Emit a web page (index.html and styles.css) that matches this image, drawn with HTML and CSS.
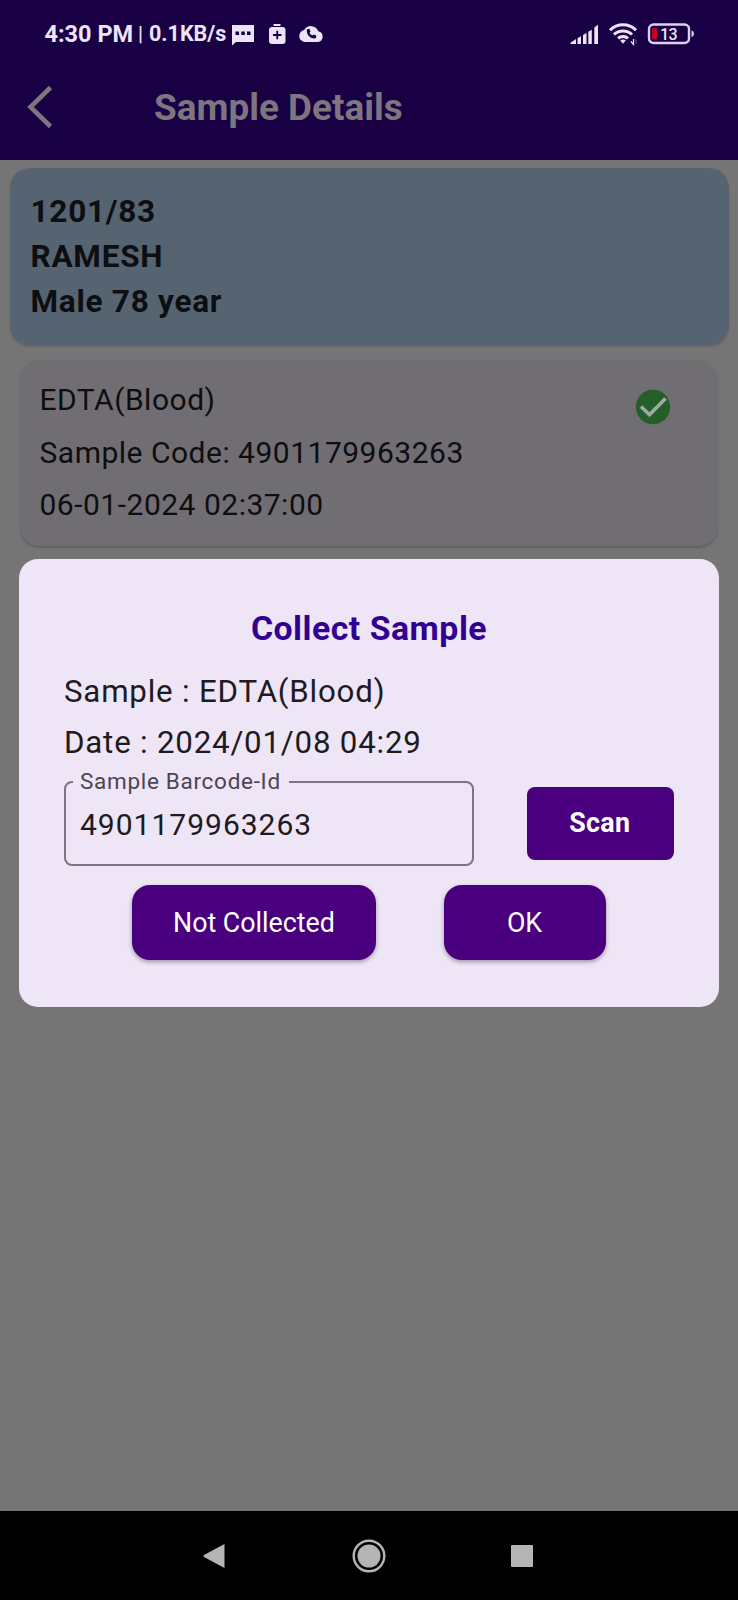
FILE: index.html
```html
<!DOCTYPE html>
<html lang="en">
<head>
<meta charset="utf-8">
<title>Sample Details</title>
<link rel="stylesheet" href="styles.css">
</head>
<body>
<div class="screen">
  <header class="header">
    <div class="status">
      <span class="clock">4:30 PM</span><span class="bar">|</span><span class="speed">0.1KB/s</span>
      <svg class="ic-chat" width="24" height="22" viewBox="0 0 24 22"><path fill="#ece4f7" d="M1 1h22v17H5l-4 3.500z"/><path fill="#190044" d="M4.500 7.500h3.500v3.500H4.500zM10.300 7.500h3.500v3.500h-3.500zM16 7.500h3.500v3.500H16z"/></svg>
      <svg class="ic-med" width="18" height="22" viewBox="0 0 18 22"><path fill="#ece4f7" d="M5.500 1h7v2h-7z"/><rect x="1" y="4" width="16.500" height="17" rx="3" fill="#ece4f7"/><path stroke="#190044" stroke-width="1.800" d="M5 12h8.500M9.250 7.800v8.400"/></svg>
      <svg class="ic-cloud" width="26" height="20" viewBox="0 0 26 20"><path fill="#ece4f7" d="M7 18a6 6 0 0 1-.800-11.900A7.800 7.800 0 0 1 20.300 7.200 5.500 5.500 0 0 1 20 18z"/><path fill="#190044" d="M9.300 5.300l2-.5 1.300 2.700-1.100 1.200q1 1.900 2.900 2.900l1.300-1 2.700 1.200-.4 2q-.5.800-1.700.8Q9.500 14 8.700 7q-.1-1.200.600-1.700z"/></svg>
      <span class="grow"></span>
      <svg class="ic-signal" width="29" height="21" viewBox="0 0 29 21"><path fill="#ece4f7" d="M.5 20v-1.300L6 15v5zM7.500 14.200l3.500-2V20H7.500zM13 11l3.500-2v11H13zM18.300 7.700l3.500-2V20h-3.500zM24.300 3.500L28 .8V20h-3.700z"/></svg>
      <svg class="ic-wifi" width="31" height="24" viewBox="0 0 31 24"><g fill="none" stroke="#ece4f7" stroke-width="3"><path d="M2 8.200a18.500 18.500 0 0 1 26 0"/><path d="M6 12.500a13 13 0 0 1 18 0"/><path d="M10 16.400a7.500 7.500 0 0 1 10 0"/></g><path fill="#ece4f7" d="M12.200 18.600q2.800-2.200 5.600 0L15 21.800z"/><path stroke="#ece4f7" stroke-width="1.200" fill="none" d="M25.500 17v5.500l-2.500-3"/><path stroke="#716096" d="M28 17.500v4"/></svg>
      <svg class="ic-battery" width="48" height="22" viewBox="0 0 48 22"><rect x="2" y="1.500" width="40" height="18.500" rx="4.500" fill="none" stroke="#ded0f0" stroke-width="2.400"/><rect x="5" y="5" width="5" height="11.500" rx="1.500" fill="#c8001c"/><path fill="#ded0f0" d="M44.500 7.500q2.500.5 2.500 3.300T44.500 14z"/><text x="13" y="17" textLength="17.500" class="batt">13</text></svg>
    </div>
    <div class="appbar">
      <svg class="back" width="28" height="44" viewBox="0 0 28 44"><path d="M24.500 2.500L4.500 22l20 19.500" fill="none" stroke="#7d757f" stroke-width="4.600"/></svg>
      <h1 class="title">Sample Details</h1>
    </div>
  </header>
  <main class="content">
    <section class="patient">
      <div>1201/83</div><div>RAMESH</div><div>Male 78 year</div>
    </section>
    <section class="sample">
      <div class="sample-lines"><div>EDTA(Blood)</div><div>Sample Code: 4901179963263</div><div>06-01-2024 02:37:00</div></div>
      <svg class="check" width="36" height="36" viewBox="0 0 36 36"><circle cx="18" cy="18" r="17.200" fill="#245e28"/><path d="M6 17.500l8.500 8.300L30.500 9.500" fill="none" stroke="#a3a8a4" stroke-width="3.600"/></svg>
    </section>
    <section class="dialog">
      <h2 class="dialog-title">Collect Sample</h2>
      <div class="info">Sample : EDTA(Blood)</div>
      <div class="info date">Date : 2024/01/08 04:29</div>
      <div class="row">
        <fieldset class="field"><legend>Sample Barcode-Id</legend><div class="value">4901179963263</div></fieldset>
        <button class="scan">Scan</button>
      </div>
      <div class="actions"><button class="btn not">Not Collected</button><button class="btn ok">OK</button></div>
    </section>
  </main>
  <nav class="nav">
    <svg width="22" height="26" viewBox="0 0 22 26"><path fill="#b5b5b5" d="M21.500 1v24L1 14q-1-1 0-2z"/></svg>
    <svg class="home" width="34" height="34" viewBox="0 0 34 34"><circle cx="17" cy="17" r="15.300" fill="none" stroke="#b5b5b5" stroke-width="2.400"/><circle cx="17" cy="17" r="11.500" fill="#b5b5b5"/></svg>
    <div class="recent"></div>
  </nav>
</div>
</body>
</html>
```
FILE: styles.css
```css
* { box-sizing: border-box; }
body { margin: 0; font-family: Roboto, sans-serif; }
.screen { width: 738px; height: 1600px; display: flex; flex-direction: column; background: #757575; }
.header { height: 160px; background: #190044; }
.status { height: 68px; padding: 0 43.500px 0 44.500px; display: flex; align-items: center; color: #ece4f7; font-weight: 700; white-space: nowrap; line-height: 70px; }
.clock { width: 93.500px; font-size: 23.500px; }
.bar { width: 11px; font-size: 20px; font-weight: 500; }
.speed { width: 82px; font-size: 21.500px; }
.ic-chat { margin-top: 2px; }
.ic-med { margin: -1px 0 0 13px; }
.ic-cloud { margin: -1px 0 0 12px; }
.grow { flex: 1; }
.ic-signal { margin-right: 9px; }
.ic-wifi { margin-right: 8px; }
.batt { font: 500 16px Roboto, sans-serif; fill: #ece4f7; }
.appbar { display: flex; align-items: center; height: 78px; padding-left: 26px; }
.back { margin-right: 100px; }
.title { margin: 0; color: #7d757f; font-size: 36.900px; font-weight: 700; }
.content { position: relative; flex: 1; }
.patient { height: 177px; margin: 8px 9.500px 0; padding: 21px; border-radius: 20px; background: #566370; color: #0c0e11; font-size: 31.500px; font-weight: 700; line-height: 45px; box-shadow: 0 2px 2px #656565; letter-spacing: .75px; }
.sample { height: 186px; margin: 15px 20px 0; padding: 14px 47px 0 19.500px; border-radius: 20px; background: #716e73; color: #0e0d10; display: flex; justify-content: space-between; font-size: 30px; line-height: 52.700px; letter-spacing: .5px; box-shadow: 0 2px 2px #605f63; }
.check { margin-top: 15px; }
.dialog { position: absolute; top: 399px; left: 19px; width: 700px; height: 448px; padding: 46px 45px 0; border-radius: 19px; background: #eee5f6; color: #1d1a20; }
.dialog-title { margin: 0; text-align: center; font-size: 33.800px; font-weight: 700; line-height: 47px; color: #310093; letter-spacing: .5px; }
.info { margin-top: 15px; font-size: 31.250px; line-height: 50px; letter-spacing: .8px; }
.date { margin-top: 1px; }
.row { display: flex; justify-content: space-between; margin-top: -1px; }
.field { width: 410px; height: 99px; margin: 0; padding: 0 14px; border: 2px solid #7d7485; border-radius: 8px; }
.field legend { padding: 0 8px 2px 7px; margin-left: -7px; font-size: 22.500px; line-height: 28px; letter-spacing: .7px; color: #4b4452; }
.value { font-size: 30px; line-height: 56px; letter-spacing: 1px; }
.scan { width: 147.500px; height: 73px; margin: 20px 0 0; border: 0; border-radius: 8px; padding: 0 1px 1px 0; background: #4a007e; color: #fff; font: 700 26.800px Roboto, sans-serif; letter-spacing: .3px; }
.actions { display: flex; gap: 67.500px; margin: 19px 0 0 68px; }
.btn { height: 75px; border: 0; border-radius: 18px; padding: 0; background: #4a007e; color: #fff; font: 400 26.800px Roboto, sans-serif; box-shadow: 0 2px 4px #9d94a5; }
.not { width: 244px; }
.ok { width: 162px; }
.nav { height: 89px; background: #000; display: flex; align-items: center; padding-left: 203px; }
.home { margin-left: 127px; }
.recent { width: 22px; height: 22px; margin-left: 125px; background: #b5b5b5; border-radius: 1px; }
```
